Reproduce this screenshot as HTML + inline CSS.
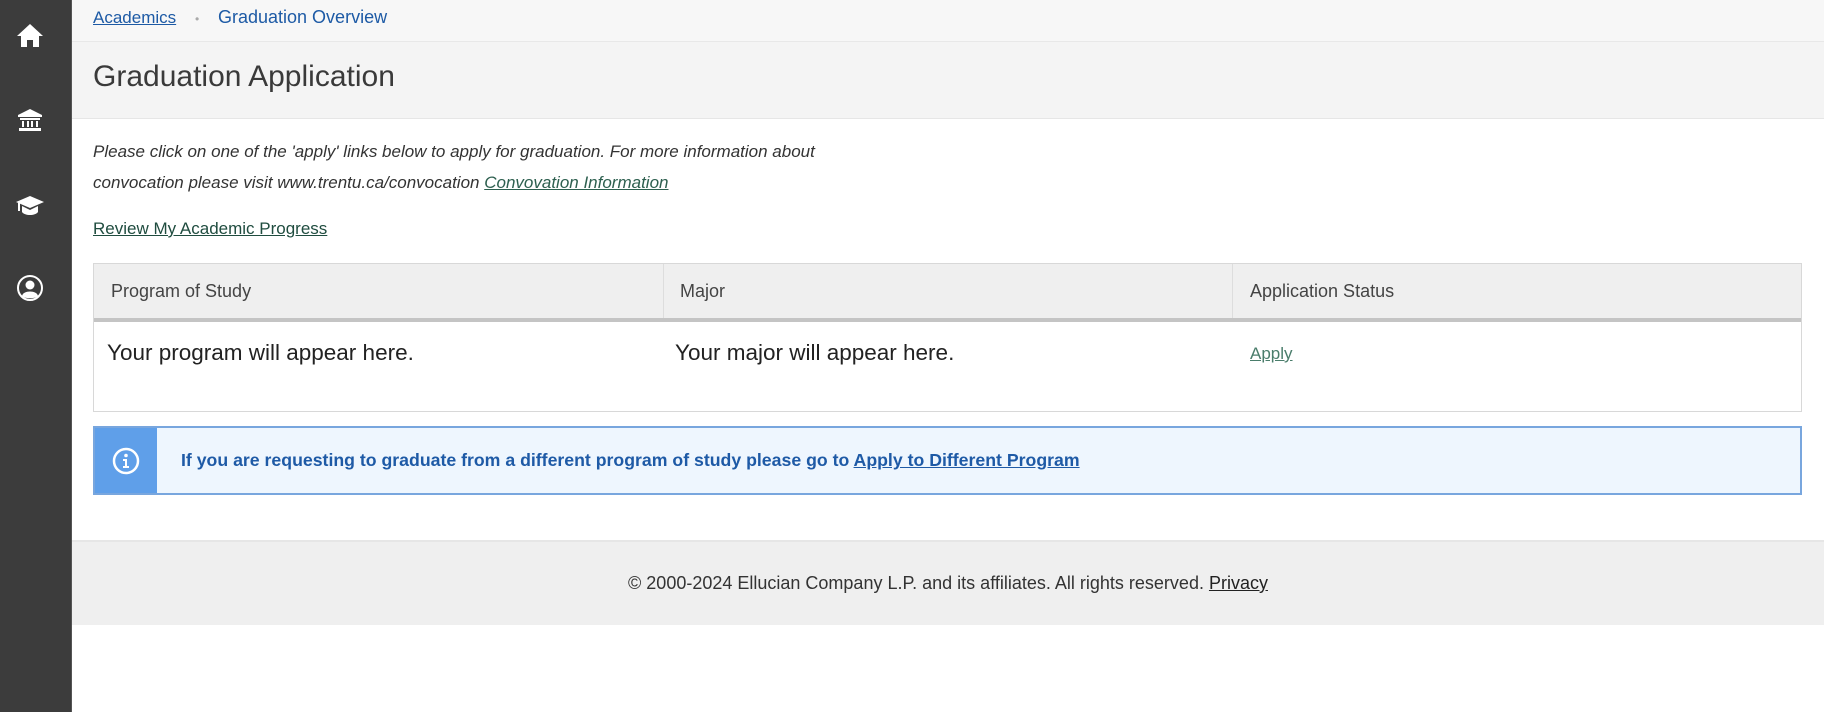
<!DOCTYPE html>
<html><head><meta charset="utf-8"><style>
*{margin:0;padding:0;box-sizing:border-box}
body{width:1824px;height:712px;background:#fff;font-family:"Liberation Sans",sans-serif;position:relative;overflow:hidden;color:#333}
.side{position:absolute;left:0;top:0;width:72px;height:712px;background:#3c3c3c;border-right:1px solid #555}
.side svg{position:absolute;left:15px}
.crumb{position:absolute;left:72px;top:0;right:0;height:42px;background:#f7f7f7;border-bottom:1px solid #e8e8e8}
.crumb span{position:absolute;top:7px;font-size:18px;color:#1d5aa5}
.hdr{position:absolute;left:72px;top:42px;right:0;height:77px;background:#f4f4f4;border-bottom:1px solid #e6e6e6}
.hdr h1{position:absolute;left:21px;top:18px;font-weight:normal;font-size:30px;color:#3a3a3a}
.intro{position:absolute;left:93px;top:137px;font-size:17px;font-style:italic;line-height:30.5px;color:#333}
a{color:#2d5f4f}
.rev{position:absolute;left:93px;top:219px;font-size:17px;color:#1f4c3f;text-decoration:underline}
.tbl{position:absolute;left:93px;top:263px;width:1709px;height:149px;border:1px solid #d8d8d8;background:#fff}
.th{position:absolute;top:0;height:58px;background:#efefef;border-bottom:4px solid #c4c4c4;left:0;right:0}
.col{position:absolute;top:0;height:54px;border-left:1px solid #ddd}
.th div.t{position:absolute;top:17px;font-size:18px;color:#444}
.cell{position:absolute;top:76px;font-size:22.5px;color:#222}
.info{position:absolute;left:93px;top:426px;width:1709px;height:69px;background:#eef6fe;border:2px solid #78a6de}
.strip{position:absolute;left:0;top:0;width:62px;height:100%;background:#5f9fe9}
.info .txt{position:absolute;left:86px;top:22px;font-size:17.7px;color:#1e5aa6;font-weight:bold}
.info .txt a{color:#1e5aa6}
.foot{position:absolute;left:72px;top:540px;right:0;height:85px;background:#efefef;border-top:2px solid #e6e6e6;text-align:center;font-size:18px;line-height:83px;color:#333}
.foot a{color:#222}
</style></head><body>
<div class="side">
<svg style="top:21px" width="30" height="28" viewBox="0 0 30 28"><path d="M15 3 L2 15 H6 V26 H12 V19 H18 V26 H24 V15 H28 Z" fill="#fff"/></svg>
<svg style="top:106px" width="30" height="28" viewBox="0 0 30 28"><path d="M15 3 L3 9 V11 H27 V9 Z M5 12 H25 V14 H5 Z M7 15 H9 V21 H7 Z M12 15 H14 V21 H12Z M16 15 H18 V21 H16Z M21 15 H23 V21 H21Z M4 22 H26 V25 H4Z" fill="#fff"/></svg>
<svg style="top:191px" width="30" height="28" viewBox="0 0 30 28"><path d="M15 5 L1 11 L15 17 L29 11 Z M7 15 V21 C10 25 20 25 23 21 V15 L15 19 Z M3 12 V20 H5 V12Z" fill="#fff"/></svg>
<svg style="top:274px" width="30" height="28" viewBox="0 0 30 28"><circle cx="15" cy="14" r="12" fill="none" stroke="#fff" stroke-width="2"/><circle cx="15" cy="11" r="4.5" fill="#fff"/><path d="M7 22 C8 16 22 16 23 22 C20 25 10 25 7 22Z" fill="#fff"/></svg>
</div>
<div class="crumb"><span style="left:21px;text-decoration:underline;font-size:17px;top:8px">Academics</span><span style="left:123px;color:#aaa;font-size:12px;top:12px">•</span><span style="left:146px">Graduation Overview</span></div>
<div class="hdr"><h1>Graduation Application</h1></div>
<div class="intro">Please click on one of the 'apply' links below to apply for graduation. For more information about<br>convocation please visit www.trentu.ca/convocation <a href="#">Convovation Information</a></div>
<div class="rev">Review My Academic Progress</div>
<div class="tbl">
<div class="th">
<div class="t" style="left:17px">Program of Study</div>
<div class="col" style="left:569px"></div><div class="t" style="left:586px">Major</div>
<div class="col" style="left:1138px"></div><div class="t" style="left:1156px">Application Status</div>
</div>
<div class="cell" style="left:13px">Your program will appear here.</div>
<div class="cell" style="left:581px">Your major will appear here.</div>
<div class="cell" style="left:1156px;font-size:17px;top:80px"><a href="#" style="color:#4a7d6b">Apply</a></div>
</div>
<div class="info"><div class="strip"><svg style="position:absolute;left:16px;top:18px" width="30" height="30" viewBox="0 0 30 30"><circle cx="15" cy="15" r="12" fill="none" stroke="#fff" stroke-width="2.5"/><circle cx="15" cy="9.5" r="1.8" fill="#fff"/><path d="M12 13 H16 V20 H18 V22 H12 V20 H14 V15 H12Z" fill="#fff"/></svg></div>
<div class="txt">If you are requesting to graduate from a different program of study please go to <a href="#">Apply to Different Program</a></div></div>
<div class="foot">© 2000-2024 Ellucian Company L.P. and its affiliates. All rights reserved. <a href="#">Privacy</a></div>
</body></html>
